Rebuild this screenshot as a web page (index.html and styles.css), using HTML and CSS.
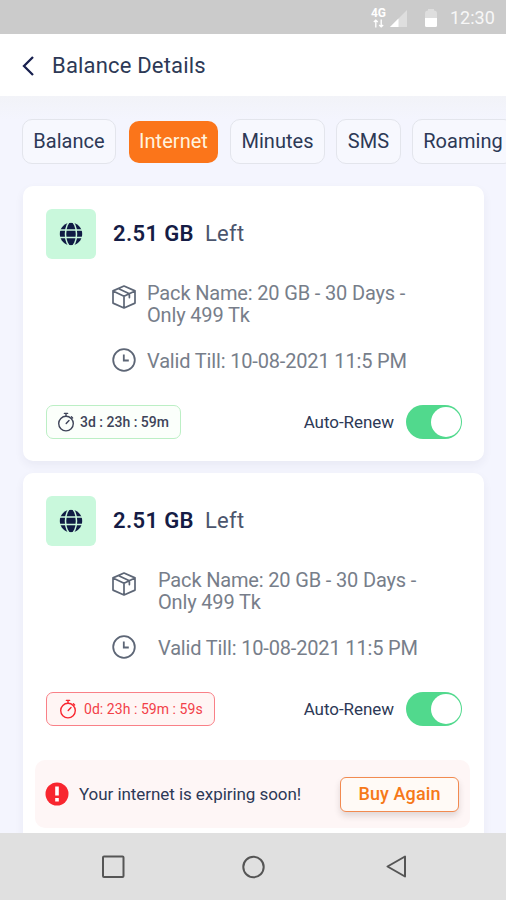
FILE: index.html
```html
<!DOCTYPE html>
<html lang="en">
<head>
<meta charset="utf-8">
<title>Balance Details</title>
<link rel="stylesheet" href="styles.css">
</head>
<body>
<svg class="sprite" aria-hidden="true">
  <symbol id="globe" viewBox="0 0 24 24">
    <circle cx="12" cy="12" r="11.2" fill="#101b44"/>
    <g fill="none" stroke="#c9f8dc" stroke-width="1.5"><ellipse cx="12" cy="12" rx="5.5" ry="12.4"/><path d="M0 8h24M0 15.6h24"/></g>
  </symbol>
  <symbol id="box" viewBox="0 0 24 24">
    <g fill="none" stroke="currentColor" stroke-width="1.7" stroke-linejoin="round" stroke-linecap="round"><path d="M12 1 1 5.9v12.2L12 23l11-4.9V5.9zM1 5.9l11 5.3 11-5.3M12 11.2V23M6.2 3.6l11.2 5.2v3.8"/></g>
  </symbol>
  <symbol id="clock" viewBox="0 0 24 24">
    <g fill="none" stroke="currentColor" stroke-width="1.8"><circle cx="12" cy="12" r="10.8"/><path d="M11.8 6.5v6h5"/></g>
  </symbol>
  <symbol id="timer" viewBox="0 0 18 20">
    <g fill="none" stroke="currentColor" stroke-width="1.4" stroke-linecap="round"><circle cx="9" cy="11.6" r="7.3"/><path d="M9 4.3V1.5M7.4 1.4h3.2M9.2 11.4l2.8-2.9M14.4 4.8l1.2 1.2"/></g>
  </symbol>
</svg>
<div class="screen">
  <div class="status">
    <div class="network">
      <span class="g4">4G</span>
      <svg class="arrows" viewBox="0 0 12 10"><path d="M3 1v8.500M.8 3.400 3 1.200l2.200 2.200M9 .5V9M6.800 6.600 9 8.800l2.200-2.200" fill="none" stroke="#fff" stroke-width="1.500"/></svg>
    </div>
    <svg class="signal" viewBox="0 0 17 17"><path d="M17 0v17H0z" fill="#dedede"/><path d="M8.500 8.500V17H0z" fill="#fff"/></svg>
    <svg class="battery" viewBox="0 0 12 18"><path d="M3 0h6v1.500q3 0 3 3V10H0V4.500q0-3 3-3z" fill="#dedede"/><path d="M0 9h12v7.500q0 1.500-1.500 1.500h-9Q0 18 0 16.500z" fill="#fff"/></svg>
    <span class="time">12:30</span>
  </div>
  <header class="header">
    <svg class="back" viewBox="0 0 12 20"><path d="M11 1 2 10l9 9" fill="none" stroke="#18204f" stroke-width="2.3"/></svg>
    <h1 class="title">Balance Details</h1>
  </header>
  <main class="content">
    <nav class="tabs">
      <div class="tab balance">Balance</div>
      <div class="tab active">Internet</div>
      <div class="tab minutes">Minutes</div>
      <div class="tab sms">SMS</div>
      <div class="tab roaming">Roaming</div>
    </nav>
    <section class="card">
      <div class="top">
        <div class="tile"><svg class="globe"><use href="#globe"/></svg></div>
        <div class="amount">2.51 GB</div><div class="left">Left</div>
      </div>
      <div class="row pack"><svg class="icon"><use href="#box"/></svg><p class="info">Pack Name: 20 GB - 30 Days -<br>Only 499 Tk</p></div>
      <div class="row"><svg class="icon"><use href="#clock"/></svg><p class="info">Valid Till: 10-08-2021 11:5 PM</p></div>
      <div class="foot">
        <div class="pill"><svg class="timer"><use href="#timer"/></svg><span>3d : 23h : 59m</span></div>
        <span class="renew">Auto-Renew</span><div class="toggle"><div class="knob"></div></div>
      </div>
    </section>
    <section class="card wide">
      <div class="top">
        <div class="tile"><svg class="globe"><use href="#globe"/></svg></div>
        <div class="amount">2.51 GB</div><div class="left">Left</div>
      </div>
      <div class="row pack"><svg class="icon"><use href="#box"/></svg><p class="info">Pack Name: 20 GB - 30 Days -<br>Only 499 Tk</p></div>
      <div class="row"><svg class="icon"><use href="#clock"/></svg><p class="info">Valid Till: 10-08-2021 11:5 PM</p></div>
      <div class="foot">
        <div class="pill danger"><svg class="timer"><use href="#timer"/></svg><span>0d: 23h : 59m : 59s</span></div>
        <span class="renew">Auto-Renew</span><div class="toggle"><div class="knob"></div></div>
      </div>
      <div class="notice">
        <svg class="alert" viewBox="0 0 24 24"><circle cx="12" cy="12" r="11.5" fill="#f8262f"/><path d="M10.200 4.500h3.600v9h-3.600zM10.200 16h3.600v3.500h-3.600z" fill="#fff"/></svg>
        <span class="message">Your internet is expiring soon!</span>
        <div class="buy">Buy Again</div>
      </div>
    </section>
  </main>
  <footer class="navbar">
    <svg viewBox="0 0 24 24"><rect x="2" y="1.500" width="20.500" height="20.500" rx="1"/></svg>
    <svg viewBox="0 0 24 24"><circle cx="11.500" cy="12" r="10.200"/></svg>
    <svg viewBox="0 0 24 24"><path d="M22 1.500v20L4.500 11.500z" stroke-linejoin="round"/></svg>
  </footer>
</div>
</body>
</html>
```
FILE: styles.css
```css
* { box-sizing: border-box; }
body { margin: 0; font-family: Roboto, "Liberation Sans", sans-serif; color: #2d3956; }
svg { display: block; flex: none; }
.sprite { display: none; }
.screen { width: 506px; height: 900px; overflow: hidden; display: flex; flex-direction: column; background: #f4f5fd; }
.status { flex: none; height: 34px; background: #cbcbcb; display: flex; align-items: center; justify-content: flex-end; padding: 2px 11px 0 0; color: #fff; }
.network { width: 17px; height: 22px; margin-right: 3px; display: flex; flex-direction: column; align-items: center; }
.g4 { font-size: 12px; line-height: 12px; font-weight: 700; }
.arrows { width: 11px; height: 9px; }
.signal { width: 17px; height: 17px; margin-right: 18px; }
.battery { width: 12px; height: 18px; margin-right: 13px; }
.time { font-size: 18px; line-height: 20px; width: 45px; white-space: nowrap; color: #f7f7f7; }
.header { flex: none; height: 62px; background: #fff; display: flex; align-items: center; padding: 1px 0 0 22px; }
.back { width: 12px; height: 20px; margin-right: 18px; }
.title { margin: 0; font-size: 22px; font-weight: 400; letter-spacing: .18px; }
.content { flex: 1; min-height: 0; overflow: hidden; padding: 23px 22px 0; background: linear-gradient(#f2f3f8, #f4f5fe 24px); }
.tabs { display: flex; align-items: center; width: 540px; height: 45px; }
.tab { flex: none; height: 45px; border: 1px solid #e3e5ec; border-radius: 10px; background: #f7f8fe; display: flex; align-items: center; justify-content: center; padding-bottom: 1px; font-size: 20px; letter-spacing: .03px; white-space: nowrap; }
.balance { width: 94px; margin-right: 13px; }
.tab.active { width: 89px; height: 42px; margin-right: 12px; background: #fb751a; border: 0; color: #fff3df; }
.minutes { width: 95px; margin-right: 11px; }
.sms { width: 65px; margin-right: 11px; }
.roaming { width: 102px; }
.card { width: 461px; height: 275px; margin: 22px 0 0 1px; padding: 23px; border-radius: 10px; background: #fff; box-shadow: 0 4px 10px rgba(50, 50, 80, .06); }
.card.wide { margin-top: 12px; height: 372px; }
.top { display: flex; align-items: center; height: 50px; }
.tile { width: 50px; height: 50px; border-radius: 6px; background: #c9f8dc; display: flex; align-items: center; justify-content: center; margin-right: 17px; }
.globe { width: 24px; height: 24px; }
.amount { width: 92px; margin-top: -2px; font-size: 22px; font-weight: 600; color: #151c45; letter-spacing: .35px; white-space: nowrap; }
.left { margin-top: -2px; font-size: 22px; letter-spacing: .25px; color: #4b556d; }
.row { display: flex; padding-left: 66px; color: #777e8a; }
.row.pack { margin: 23px 0 23px; }
.icon { width: 24px; height: 24px; margin: 3px 11px 0 0; color: #5d6676; }
.row:not(.pack) .icon { margin-top: -1px; }
.wide .icon { margin-right: 22px; }
.info { margin: 0; font-size: 20px; line-height: 22px; letter-spacing: -.16px; white-space: nowrap; }
.row:not(.pack) .info { padding-top: 1px; margin-bottom: -1px; }
.foot { display: flex; align-items: center; height: 34px; margin: 34px -1px 0 0; }
.row + .foot { margin-top: 33px; }
.pill { width: 135px; height: 34px; border: 1.5px solid #bcefc5; border-radius: 7px; background: #fbfffb; display: flex; align-items: center; padding-left: 10px; font-size: 14px; white-space: nowrap; color: #3e4459; font-weight: 500; }
.timer { width: 18px; height: 20px; margin-right: 5px; }
.pill.danger { width: 169px; border-color: #f98087; background: #fff5f4; color: #f24048; padding-left: 12px; font-weight: 400; letter-spacing: .05px; }
.danger .timer { margin-right: 7px; color: #f8262f; }
.renew { margin-left: auto; font-size: 17px; letter-spacing: -.05px; white-space: nowrap; }
.toggle { flex: none; width: 56px; height: 34px; margin-left: 12px; border-radius: 17px; background: #51d98d; padding: 2px; }
.knob { width: 30px; height: 30px; margin-left: 23px; border-radius: 50%; background: #fff; }
.notice { height: 68px; margin: 34px -9px 0 -11px; padding: 0 11px; border-radius: 10px; background: #fef6f6; display: flex; align-items: center; }
.alert { width: 24px; height: 24px; margin-right: 10px; margin-left: -1px; }
.message { font-size: 17px; letter-spacing: -.06px; white-space: nowrap; }
.buy { margin-left: auto; width: 119px; height: 35px; border: 1.5px solid #f28a50; border-radius: 6px; background: #fffaf6; display: flex; align-items: center; justify-content: center; padding-bottom: 2px; color: #f67819; font-size: 18px; font-weight: 500; letter-spacing: .1px; box-shadow: 0 4px 6px rgba(60, 40, 40, .15); white-space: nowrap; }
.navbar { flex: none; height: 67px; background: #e0e0e0; display: flex; align-items: center; padding-left: 101px; gap: 117px; }
.navbar svg { width: 24px; height: 24px; fill: none; stroke: #555; stroke-width: 2; }
```
